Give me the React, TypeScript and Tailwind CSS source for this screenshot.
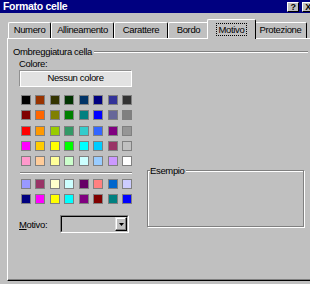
import { ReactNode } from 'react'

const palette = [
  ['#000000', '#993300', '#333300', '#003300', '#003366', '#000080', '#333399', '#333333'],
  ['#800000', '#ff6600', '#808000', '#008000', '#008080', '#0000ff', '#666699', '#808080'],
  ['#ff0000', '#ff9900', '#99cc00', '#339966', '#33cccc', '#3366ff', '#800080', '#969696'],
  ['#ff00ff', '#ffcc00', '#ffff00', '#00ff00', '#00ffff', '#00ccff', '#993366', '#c0c0c0'],
  ['#ff99cc', '#ffcc99', '#ffff99', '#ccffcc', '#ccffff', '#99ccff', '#cc99ff', '#ffffff'],
]

// colori riempimento / linee grafici
const chartColors = [
  ['#9999ff', '#993366', '#ffffcc', '#ccffff', '#660066', '#ff8080', '#0066cc', '#ccccff'],
  ['#000080', '#ff00ff', '#ffff00', '#00ffff', '#800080', '#800000', '#008080', '#0000ff'],
]

const tabs = [
  { label: 'Numero', w: 'w-[43px]' },
  { label: 'Allineamento', w: 'w-[63px]' },
  { label: 'Carattere', w: 'w-[54px]' },
  { label: 'Bordo', w: 'w-[41px]' },
  { label: 'Motivo', w: 'w-[49px]', active: true },
  { label: 'Protezione', w: 'w-[53px]' },
]

function Swatches({ rows }: { rows: string[][] }) {
  return (
    <div className="ml-[2px] flex flex-col gap-y-[5.25px]">
      {rows.map((row, i) => (
        <div key={i} className="flex gap-x-[4.43px]">
          {row.map((c, j) => (
            <div
              key={j}
              className="w-[10px] h-[10px] border border-[#808080]"
              style={{ backgroundColor: c }}
            />
          ))}
        </div>
      ))}
    </div>
  )
}

function CaptionButton({ children }: { children: ReactNode }) {
  return (
    <div className="w-[12px] h-[10px] bg-[#c0c0c0] border-t border-l border-white border-r border-b border-r-black border-b-black flex items-center justify-center text-[9px] font-bold leading-none text-black">
      {children}
    </div>
  )
}

export default function App() {
  return (
    <div className="w-[310px] h-[284px] overflow-hidden bg-[#c0c0c0] font-['Liberation_Sans',Arial,sans-serif] text-[9.5px] tracking-[-0.35px] text-black select-none">
      {/* barra del titolo */}
      <div className="h-[13px] bg-[#000080] flex items-center justify-between pl-[3px]">
        <span className="text-white font-bold text-[10.5px] tracking-[-0.3px] leading-none">Formato celle</span>
        <div className="flex gap-[3px] -mr-[4px] mt-[1px]">
          <CaptionButton>?</CaptionButton>
          <CaptionButton>X</CaptionButton>
        </div>
      </div>

      {/* schede */}
      <div className="mt-[6px] h-[19px] flex items-end pl-[8px]">
        {tabs.map((t) =>
          t.active ? (
            <div
              key={t.label}
              className={`${t.w} relative z-10 -mx-[2px] -mb-[1px] h-[20px] bg-[#c0c0c0] border-t border-l border-white border-r border-r-black rounded-t-[2px] flex items-start justify-center pt-[3px]`}
            >
              <span className="border border-dotted border-black px-[2px] leading-[11px]">{t.label}</span>
            </div>
          ) : (
            <div
              key={t.label}
              className={`${t.w} h-[16px] border-t border-l border-white border-r border-r-black rounded-t-[2px] flex items-center justify-center`}
            >
              {t.label}
            </div>
          ),
        )}
      </div>

      {/* pannello */}
      <div className="ml-[7px] w-[310px] h-[243px] border-l border-t border-white border-b border-b-black shadow-[inset_0_-1px_0_#808080] pt-[7px]">
        <div className="flex items-center pl-[5px] h-[11px]">
          <span className="leading-[11px]">Ombreggiatura cella</span>
          <div className="ml-[2px] w-[214px] border-t border-t-[#808080] border-b border-b-white" />
        </div>

        <div className="flex pl-[11px]">
          {/* colonna sinistra */}
          <div className="w-[114px] flex flex-col">
            <div className="mt-[1px] leading-[11px]">Colore:</div>
            <div className="mt-[1px] h-[17px] w-[113px] border-t border-l border-[#909090] border-r border-b border-r-white border-b-white shadow-[inset_1px_1px_0_#fff] bg-[#e2e2e2] flex items-center justify-center">
              Nessun colore
            </div>
            <div className="mt-[8px]">
              <Swatches rows={palette} />
            </div>
            <div className="mt-[6px] ml-[1px] w-[112px] border-t border-t-[#808080] border-b border-b-white" />
            <div className="mt-[5px]">
              <Swatches rows={chartColors} />
            </div>
            <div className="mt-[11px] flex items-center">
              <span className="w-[41px] leading-[11px]">
                <span className="underline">M</span>otivo:
              </span>
              <div className="w-[69px] h-[18px] border-t border-l border-[#808080] border-r border-b border-r-white border-b-white">
                <div className="h-full border-t border-l border-black border-r border-b border-r-[#c0c0c0] border-b-[#c0c0c0] flex justify-end">
                  <div className="w-[12px] h-full border-t border-l border-[#e0e0e0] border-r border-b border-r-black border-b-black shadow-[inset_-1px_-1px_0_#808080,inset_1px_1px_0_#fff] flex items-center justify-center">
                    <svg width="5" height="3" viewBox="0 0 5 3">
                      <path d="M0 0H5L2.5 3Z" fill="#000" />
                    </svg>
                  </div>
                </div>
              </div>
            </div>
          </div>

          {/* esempio */}
          <div className="ml-[14px] mt-[113px] w-[157px] h-[57px] relative border border-[#808080] shadow-[1px_1px_0_#fff,inset_1px_1px_0_#fff]">
            <span className="absolute -top-[6px] left-[2px] bg-[#c0c0c0] leading-[11px] pr-[1px]">Esempio</span>
          </div>
        </div>
      </div>
    </div>
  )
}
